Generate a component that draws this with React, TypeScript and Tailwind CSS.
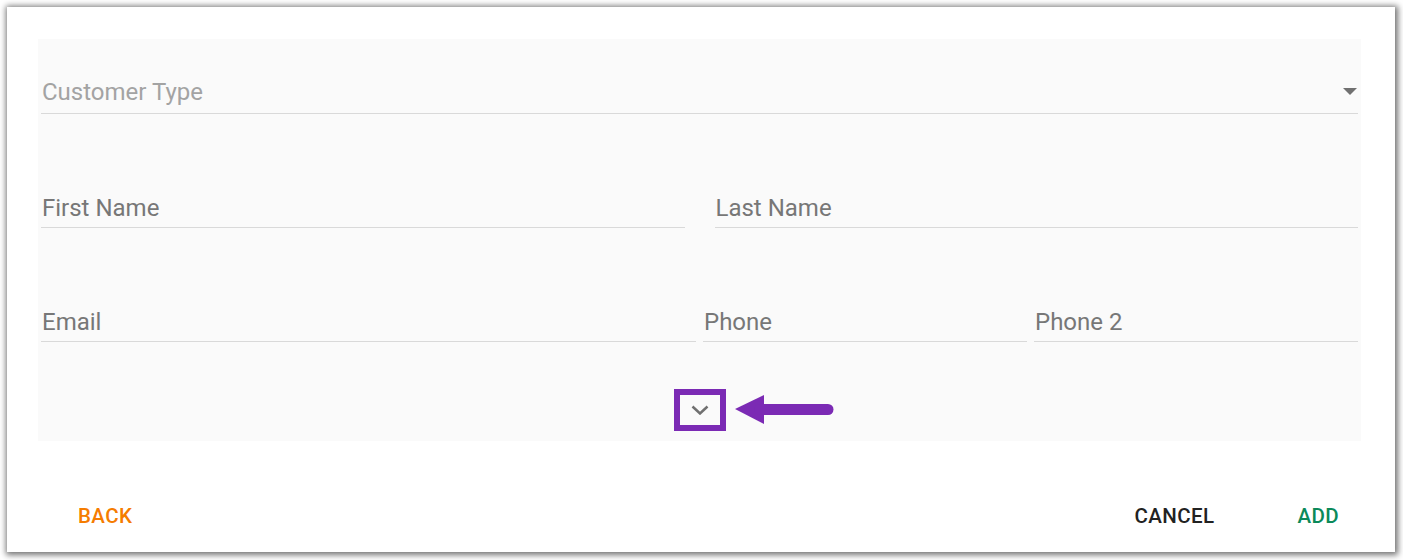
import React from "react";

const Field = ({ label, light = false, select = false }: { label: string; light?: boolean; select?: boolean }) => (
  <div className={`flex items-end justify-between border-b border-[#d9d9d9] ${select ? "pb-[6px]" : "pt-[2px] pb-[4px]"}`}>
    <span className={`px-[1px] text-[24px] leading-[30px] ${light ? "text-[#a3a3a3]" : "text-[#777777]"}`}>{label}</span>
    {select && (
      <svg width="14" height="7" viewBox="0 0 14 7" className="mb-[12px] mr-[1px]">
        <polygon points="0,0 14,0 7,7" fill="#707070" />
      </svg>
    )}
  </div>
);

const App = () => {
  return (
    <div className="h-[560px] w-[1403px] bg-white pt-[7px] pl-[7px] pr-[8px] pb-[8px] font-['Roboto',sans-serif]">
      <div className="flex h-full flex-col bg-white shadow-[1px_1px_6px_2px_rgba(0,0,0,0.55)]">
        <div className="relative mt-[32px] ml-[31px] mr-[34px] flex h-[402px] flex-col bg-[#fafafa] px-[3px] pt-[38px]">
          <Field label="Customer Type" light select />

          <div className="mt-[77px] grid grid-cols-2 gap-[30px]">
            <Field label="First Name" />
            <Field label="Last Name" />
          </div>

          <div className="mt-[77px] grid grid-cols-4 gap-x-[7px]">
            <div className="col-span-2">
              <Field label="Email" />
            </div>
            <Field label="Phone" />
            <Field label="Phone 2" />
          </div>

          <div className="mt-[47px] flex justify-center">
            <button className="flex h-[42px] w-[52px] items-center justify-center border-[6px] border-[#7b2ab4] bg-[#fafafa]">
              <svg width="18" height="10" viewBox="0 0 18 10">
                <polyline points="1.5,1.5 9,8.5 16.5,1.5" fill="none" stroke="#707070" strokeWidth="2.5" />
              </svg>
            </button>
          </div>

          {/* annotation arrow */}
          <svg width="100" height="30" viewBox="0 0 100 30" className="absolute left-[697px] top-[356px]">
            <polygon points="0,14 29,0 29,29" fill="#7b2ab4" />
            <line x1="25" y1="14.5" x2="93" y2="14.5" stroke="#7b2ab4" strokeWidth="11" strokeLinecap="round" />
          </svg>
        </div>

        <div className="mt-[51px] flex items-center justify-between pl-[50px] pr-[35px]">
          <button className="h-[48px] px-[21px] text-[20.5px] font-medium uppercase tracking-[0.02em] text-[#f57c00]">Back</button>
          <div className="flex items-center gap-[41px]">
            <button className="h-[48px] px-[21px] text-[20.5px] font-medium uppercase tracking-[0.02em] text-[#222222]">Cancel</button>
            <button className="h-[48px] px-[21px] text-[20.5px] font-medium uppercase tracking-[0.02em] text-[#0b8a5a]">Add</button>
          </div>
        </div>
      </div>
    </div>
  );
};

export default App;
